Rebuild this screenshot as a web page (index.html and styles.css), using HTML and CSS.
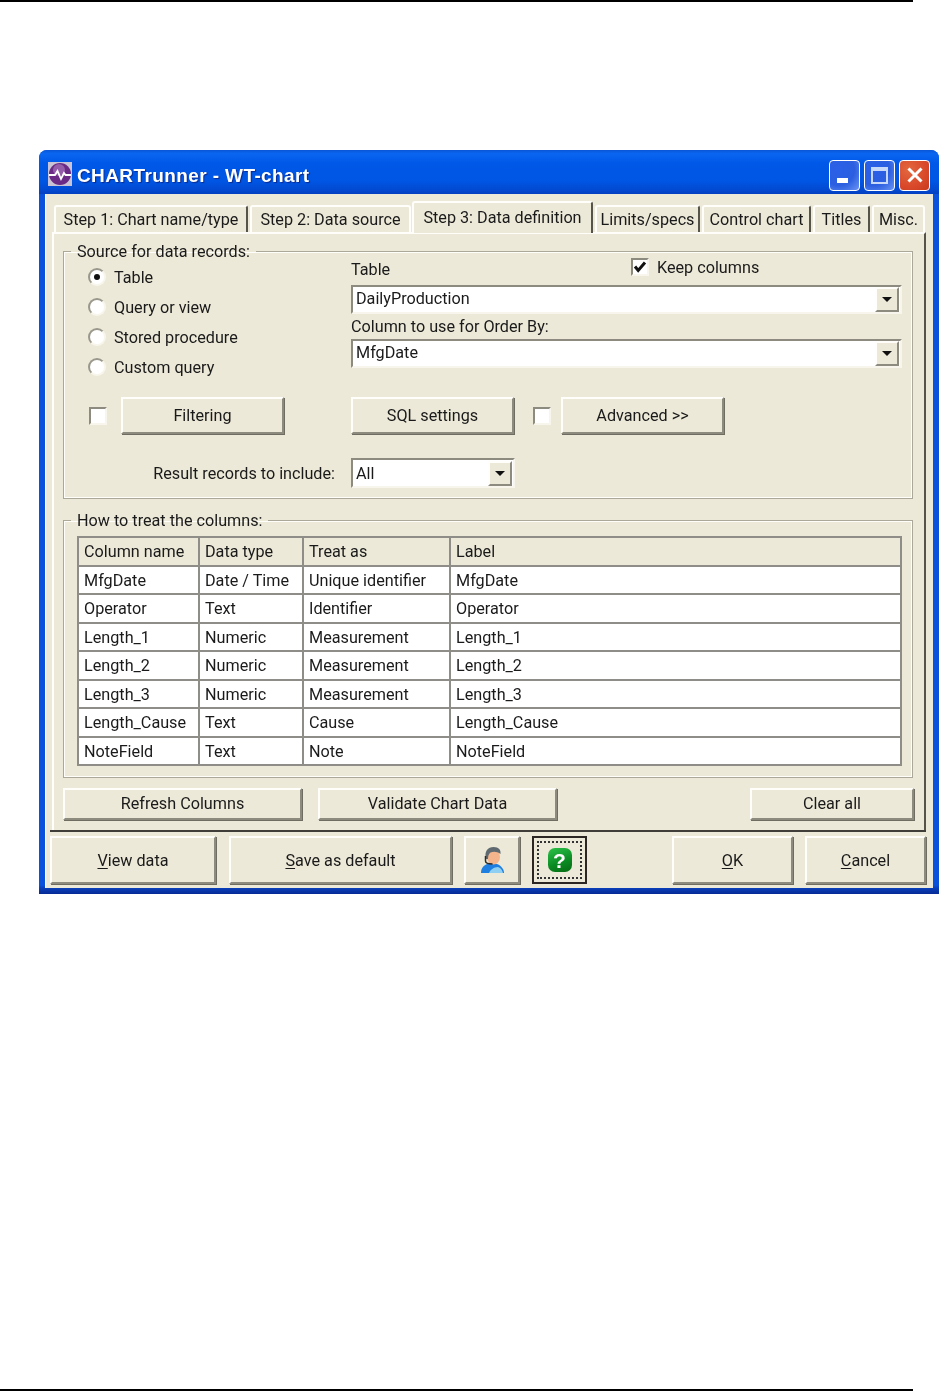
FILE: index.html
```html
<!DOCTYPE html>
<html lang="en">
<head>
<meta charset="utf-8">
<title>CHARTrunner - WT-chart</title>
<link rel="stylesheet" href="styles.css">
</head>
<body>
<div class="page">
  <div class="rule rule-top"></div>
  <div class="window">
    <header class="titlebar">
      <svg class="app-icon" width="24" height="24" viewBox="0 0 24 24">
        <rect width="24" height="24" fill="#c9c3d6"/>
        <circle cx="12" cy="12" r="11" fill="#6a2a86"/>
        <circle cx="11" cy="8" r="6" fill="#a673b8" opacity=".7"/>
        <path d="M1 13h6l2.500-4 3.500 8 3-6 1.500 2H23" fill="none" stroke="#fff" stroke-width="1.800"/>
      </svg>
      <span class="title-text">CHARTrunner - WT-chart</span>
      <div class="caption-buttons">
        <div class="cap cap-blue"><span class="glyph-min"></span></div>
        <div class="cap cap-blue"><span class="glyph-max"></span></div>
        <div class="cap cap-red">
          <svg width="18" height="18" viewBox="0 0 18 18"><path d="M2.500 2.500l13 13M15.500 2.500l-13 13" stroke="#fff" stroke-width="3"/></svg>
        </div>
      </div>
    </header>
    <div class="client">
      <nav class="tabs">
        <div class="tab tab-a">Step 1: Chart name/type</div>
        <div class="tab tab-b">Step 2: Data source</div>
        <div class="tab tab-c active">Step 3: Data definition</div>
        <div class="tab tab-d">Limits/specs</div>
        <div class="tab tab-e">Control chart</div>
        <div class="tab tab-f">Titles</div>
        <div class="tab tab-g">Misc.</div>
      </nav>
      <section class="panel">
        <fieldset class="group group-source">
          <legend>Source for data records:</legend>
          <div class="source-top">
            <div class="radios">
              <label class="radio-row"><span class="radio checked"></span>Table</label>
              <label class="radio-row"><span class="radio"></span>Query or view</label>
              <label class="radio-row"><span class="radio"></span>Stored procedure</label>
              <label class="radio-row"><span class="radio"></span>Custom query</label>
            </div>
            <div class="source-fields">
              <div class="field-head">
                <span>Table</span>
                <label class="keep"><span class="check checked">
                  <svg width="14" height="14" viewBox="0 0 14 14"><path d="M2 6.500l3.200 4L12 2.500" fill="none" stroke="#111" stroke-width="3"/></svg>
                </span>Keep columns</label>
              </div>
              <div class="combo"><span class="combo-value">DailyProduction</span><span class="arrow"></span></div>
              <div class="field-label">Column to use for Order By:</div>
              <div class="combo"><span class="combo-value">MfgDate</span><span class="arrow"></span></div>
            </div>
          </div>
          <div class="source-actions">
            <div class="action-left">
              <span class="check"></span>
              <button class="btn btn-wide">Filtering</button>
            </div>
            <div class="action-right">
              <button class="btn btn-wide">SQL settings</button>
              <span class="check check-adv"></span>
              <button class="btn btn-wide">Advanced &gt;&gt;</button>
            </div>
          </div>
          <div class="source-result">
            <div class="result-label">Result records to include:</div>
            <div class="combo combo-small"><span class="combo-value combo-value-plain">All</span><span class="arrow"></span></div>
          </div>
        </fieldset>
        <fieldset class="group group-columns">
          <legend>How to treat the columns:</legend>
          <table class="grid">
            <colgroup><col class="c1"><col class="c2"><col class="c3"><col></colgroup>
            <thead>
              <tr><th>Column name</th><th>Data type</th><th>Treat as</th><th>Label</th></tr>
            </thead>
            <tbody>
              <tr><td>MfgDate</td><td>Date / Time</td><td>Unique identifier</td><td>MfgDate</td></tr>
              <tr><td>Operator</td><td>Text</td><td>Identifier</td><td>Operator</td></tr>
              <tr><td>Length_1</td><td>Numeric</td><td>Measurement</td><td>Length_1</td></tr>
              <tr><td>Length_2</td><td>Numeric</td><td>Measurement</td><td>Length_2</td></tr>
              <tr><td>Length_3</td><td>Numeric</td><td>Measurement</td><td>Length_3</td></tr>
              <tr><td>Length_Cause</td><td>Text</td><td>Cause</td><td>Length_Cause</td></tr>
              <tr><td>NoteField</td><td>Text</td><td>Note</td><td>NoteField</td></tr>
            </tbody>
          </table>
        </fieldset>
        <div class="panel-buttons">
          <button class="btn btn-col">Refresh Columns</button>
          <button class="btn btn-col">Validate Chart Data</button>
          <button class="btn btn-clear">Clear all</button>
        </div>
      </section>
      <footer class="footer">
        <button class="btn btn-view"><u>V</u>iew data</button>
        <button class="btn btn-save"><u>S</u>ave as default</button>
        <button class="btn btn-person">
          <svg width="23" height="26" viewBox="0 0 23 26">
            <path d="M0 26c0-2 .5-7 6-9h10c5 2 7 6 7 9z" fill="#1f7fe0"/>
            <path d="M8 26c1-3 5-6 9-6 3 1 4 3 5 6z" fill="#8fd0f2"/>
            <ellipse cx="12.500" cy="10" rx="6.500" ry="7.500" fill="#f4b48c"/>
            <path d="M5 12C3 4 7 0 12.500 0S20 3 19.500 7c-3-2.500-7-3-10-1.500C7.500 7 7 9 7 12z" fill="#5f6a70"/>
            <path d="M4.500 9v5c0 2 3 3 7 3" fill="none" stroke="#2c2c2c" stroke-width="1.500"/>
          </svg>
        </button>
        <button class="btn btn-help">
          <span class="focus">
            <span class="help-icon"><span class="help-mark">?</span></span>
          </span>
        </button>
        <div class="footer-space"></div>
        <button class="btn btn-ok"><u>O</u>K</button>
        <button class="btn btn-cancel"><u>C</u>ancel</button>
      </footer>
    </div>
  </div>
  <div class="spacer"></div>
  <div class="rule rule-bottom"></div>
</div>
</body>
</html>
```
FILE: styles.css
```css
* { box-sizing: border-box; }
html, body { margin: 0; padding: 0; background: #fff; }
body { font-family: Roboto, "Liberation Sans", Arial, sans-serif; font-size: 16.200px; color: #1a1a1a; }
.page { height: 1391px; display: flex; flex-direction: column; overflow: hidden; }
.rule { width: 913px; height: 2px; background: #000; flex: none; }
.spacer { flex: 1; }
.window {
  margin: 148px 0 0 39px; width: 900px; height: 744px; flex: none;
  display: flex; flex-direction: column;
  background: linear-gradient(#0a52dc 98.8%, #0a3cb4 99.3%, #062a96);
  border-radius: 8px 8px 0 0;
  filter: blur(.35px);
}
.titlebar {
  height: 44px; flex: none; display: flex; align-items: center; padding: 0 9px 0 9px;
  border-radius: 8px 8px 0 0;
  background: linear-gradient(#0a56d6 0, #0a66f0 8%, #0058e8 30%, #0056e4 70%, #0348cf 92%, #0340c0 100%);
}
.app-icon { flex: none; margin-top: 4px; }
.title-text { margin-left: 5px; margin-top: 8px; color: #fff; font-family: "Liberation Sans", Arial, sans-serif; font-weight: bold; font-size: 19px; letter-spacing: .4px; text-shadow: 1px 1px 1px #0a2a90; }
.caption-buttons { margin-left: auto; display: flex; gap: 4px; margin-top: 6px; }
.cap { width: 31px; height: 31px; border: 1.500px solid #fff; border-radius: 4px; display: flex; align-items: center; justify-content: center; position: relative; }
.cap-blue { background: radial-gradient(circle at 30% 30%, #2a60e8, #2c5fe0 55%, #6a94f4 100%); }
.cap-red { background: radial-gradient(circle at 30% 30%, #e2683f, #d9482a 60%, #c83a1e 100%); }
.glyph-min { width: 11px; height: 5px; background: #fff; margin: 10px 5px 0 0; }
.glyph-max { width: 17px; height: 17px; border: 2px solid #c8d8f8; border-top-width: 4px; }
.client {
  flex: 1; display: flex; flex-direction: column; background: #ece9d8;
  margin: 0 6px 6px 6px; box-shadow: inset 1px 0 #fdfcf5;
}
.tabs { height: 38px; flex: none; display: flex; align-items: flex-end; margin-left: 9px; }
.tab {
  height: 27px; display: flex; align-items: center; justify-content: center;
  white-space: nowrap; padding-bottom: 1px;
  background: #ece9d8; border-top: 2px solid #fffefa; border-left: 2px solid #fffefa;
  border-right: 2px solid #55534a; border-radius: 3px 3px 0 0; margin-right: 2px;
  flex: none;
}
.tab-a { width: 194px; }
.tab-b { width: 161px; border-right: 2px solid #fffefa; margin-right: 1px; }
.tab-c { width: 181px; }
.tab-d { width: 105px; margin-right: 2px; }
.tab-e { width: 109px; }
.tab-f { width: 57px; }
.tab-g { width: 53px; border-right-color: #fffefa; margin-right: 0; }
.tab.active { height: 32px; padding-bottom: 2px; margin-bottom: -1px; position: relative; z-index: 1; }
.panel {
  height: 598px; flex: none; margin: 0 7px 0 7px;
  padding: 12px 11px 0 9px;
  border-top: 2px solid #fffefa; border-left: 2px solid #fffefa; border-right: 2px solid #55534a;
  display: flex; flex-direction: column;
}
.group {
  margin: 0; min-width: 0; border: 1px solid #aca899; box-shadow: 0 0 0 1px #fffefa inset;
  padding: 0;
}
.group legend { padding: 0 6px; line-height: 16px; height: 14px; white-space: nowrap; }
.group-source legend { margin-left: -18px; }
.group-columns legend { margin-left: -6px; }
.group-source { height: 255px; margin-top: -2px; padding: 0 0 0 25px; }
.source-top { display: flex; height: 124px; }
.radios { width: 262px; flex: none; padding-top: 4px; }
.radio-row { display: flex; align-items: center; gap: 8px; height: 30px; margin-left: -1px; }
.radio {
  width: 18px; height: 18px; border-radius: 50%; background: #fff; flex: none; display: flex; align-items: center; justify-content: center;
  border: 2px solid #9a988c; border-right-color: #f8f6ec; border-bottom-color: #f8f6ec;
}
.radio.checked::after { content: ""; width: 6px; height: 6px; border-radius: 50%; background: #111; }
.source-fields { width: 551px; flex: none; }
.field-head { height: 27px; display: flex; align-items: flex-start; justify-content: space-between; padding-top: 2px; }
.keep { display: flex; align-items: center; gap: 8px; width: 271px; height: 18px; margin-top: -2px; }
.check {
  width: 18px; height: 18px; background: #fff; flex: none; display: inline-flex; align-items: center; justify-content: center;
  border: 2px solid #8d8b80; border-right-color: #f8f6ec; border-bottom-color: #f8f6ec;
}
.combo {
  height: 29px; display: flex; align-items: center; background: #fff;
  border: 2px solid #8d8b80; border-right-color: #f8f6ec; border-bottom-color: #f8f6ec;
  padding: 0 1px 0 3px;
}
.combo-value { flex: 1; padding-bottom: 3px; }
.combo-value-plain { padding-bottom: 0; }
.arrow {
  width: 24px; height: 25px; flex: none; background: #ece9d8; display: flex; align-items: center; justify-content: center;
  border: 2px solid #8d8b80; border-top-color: #fffefa; border-left-color: #fffefa;
}
.arrow::after { content: ""; border: 5px solid transparent; border-top: 5px solid #111; border-bottom: 0; }
.field-label { height: 25px; display: flex; align-items: center; }
.source-actions { display: flex; margin-top: 15px; }
.action-left { width: 262px; flex: none; display: flex; align-items: center; gap: 14px; }
.action-right { display: flex; align-items: center; }
.check-adv { margin: 0 10px 0 19px; }
.btn {
  font: inherit; color: inherit; background: #ece9d8; padding: 0; flex: none;
  border: 2px solid; border-color: #fffefa #8d8b7e #8d8b7e #fffefa; border-radius: 0;
  box-shadow: 1px 1px #6f6d62; display: inline-flex; align-items: center; justify-content: center;
}
.btn u { text-underline-offset: 2px; }
.btn-wide { width: 163px; height: 37px; }
.source-result { display: flex; margin-top: 24px; align-items: center; }
.result-label { width: 262px; flex: none; text-align: right; padding-right: 16px; }
.combo-small { width: 164px; height: 30px; }
.group-columns { height: 265px; margin-top: 14px; padding: 9px 0 0 13px; }
.grid {
  width: 825px; height: 230px; border-collapse: collapse; table-layout: fixed; background: #fff;
  border: 2px solid #7e7c72;
}
.grid .c1 { width: 121px; }
.grid .c2 { width: 104px; }
.grid .c3 { width: 147px; }
.grid th, .grid td {
  padding: 1px 0 0 5px; text-align: left; font-weight: normal; border: 2px solid #8f8d88; white-space: nowrap;
  height: 28.500px; overflow: hidden;
}
.grid th { background: #ece9d8; }
.panel-buttons { display: flex; margin-top: 10px; }
.btn-col { width: 239px; height: 32px; margin-right: 16px; padding-bottom: 2px; }
.btn-clear { width: 164px; height: 32px; margin-left: auto; margin-right: -1px; padding-bottom: 2px; }
.footer {
  flex: 1; display: flex; align-items: flex-start; margin: 0 7px 0 5px; padding-top: 4px;
  border-top: 2px solid #3f3e38;
}
.btn-view { width: 166px; height: 48px; margin-right: 13px; }
.btn-save { width: 223px; height: 48px; margin-right: 12px; }
.btn-person { width: 56px; height: 48px; margin-right: 12px; }
.btn-help { width: 55px; height: 48px; border: 2px solid #2b2622; box-shadow: none; padding: 3px; background: #ece9d8; }
.focus { width: 100%; height: 100%; border: 2px dotted #333; display: flex; align-items: center; justify-content: center; }
.help-icon {
  width: 24px; height: 24px; border-radius: 7px; background: linear-gradient(160deg, #2cc24a, #0a8a22 60%, #066a14);
  display: flex; align-items: center; justify-content: center;
}
.help-mark { color: #fff; font-family: "Liberation Sans", Arial, sans-serif; font-weight: bold; font-size: 21px; line-height: 1; }
.footer-space { flex: 1; }
.btn-ok { width: 121px; height: 48px; margin-right: 12px; }
.btn-cancel { width: 121px; height: 48px; }
```
